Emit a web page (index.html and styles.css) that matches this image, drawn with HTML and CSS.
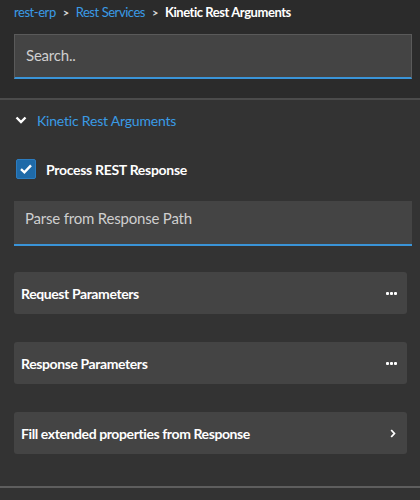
FILE: index.html
```html
<!DOCTYPE html>
<html>
<head>
<meta charset="utf-8">
<link rel="stylesheet" href="styles.css">
</head>
<body>
<div class="top">
  <nav class="crumbs">
    <a class="crumb-link">rest-erp</a>
    <span class="sep">&gt;</span>
    <a class="crumb-link">Rest Services</a>
    <span class="sep">&gt;</span>
    <span class="crumb-current">Kinetic Rest Arguments</span>
  </nav>
  <div class="search">Search..</div>
</div>
<div class="panel">
  <div class="section-head">
    <svg class="chev-down" width="12" height="8" viewBox="0 0 12 8"><path d="M1.5 1.5 L6 6 L10.5 1.5" fill="none" stroke="#fff" stroke-width="2.4"/></svg>
    <span class="section-title">Kinetic Rest Arguments</span>
  </div>
  <label class="check-row">
    <span class="checkbox"><svg width="14" height="12" viewBox="0 0 14 12"><path d="M2 6.2 L5.4 9.4 L12 2.4" fill="none" stroke="#fff" stroke-width="2.4"/></svg></span>
    <span class="check-label">Process REST Response</span>
  </label>
  <div class="field">Parse from Response Path</div>
  <div class="cards">
    <div class="card"><span>Request Parameters</span><span class="dots"><i></i><i></i><i></i></span></div>
    <div class="card"><span>Response Parameters</span><span class="dots"><i></i><i></i><i></i></span></div>
    <div class="card"><span>Fill extended properties from Response</span>
      <svg class="chev-right" width="6" height="9" viewBox="0 0 6 9"><path d="M1.2 1 L4.4 4.5 L1.2 8" fill="none" stroke="#fff" stroke-width="1.8"/></svg></div>
  </div>
  <div class="bottom-line"></div>
</div>
</body>
</html>
```
FILE: styles.css
```css
* { box-sizing: border-box; }
html, body { margin: 0; padding: 0; }
body {
  background: #333333;
  font-family: "Lato", "Liberation Sans", sans-serif;
  width: 420px;
  height: 500px;
  overflow: hidden;
}
.top {
  background: #2b2b2b;
  height: 100px;
  padding: 3px 8px 0 14px;
  border-bottom: 2px solid #4b4b4b;
}
.crumbs {
  display: flex;
  align-items: center;
  gap: 7px;
  height: 18px;
  font-size: 13px;
  letter-spacing: -0.45px;
}
.crumb-link { color: #3a9be6; }
.sep { color: #d8d8d8; font-size: 11px; font-weight: 700; }
.crumb-current { color: #ffffff; font-weight: 700; }
.search {
  margin-top: 13px;
  height: 45px;
  background: #444444;
  border: 1px solid #5a5a5a;
  border-bottom: 2px solid #3a94d8;
  color: #cfcfcf;
  font-size: 15px;
  padding: 11px 0 0 11px;
  letter-spacing: -0.2px;
}
.panel {
  padding: 9px 8px 0 14px;
}
.section-head {
  display: flex;
  align-items: center;
  height: 22px;
  gap: 10px;
  padding-left: 1px;
}
.section-title {
  color: #3a9be6;
  font-size: 14px;
  letter-spacing: -0.2px;
}
.check-row {
  display: flex;
  align-items: center;
  gap: 10px;
  margin-top: 28px;
  padding-left: 2px;
}
.checkbox {
  width: 20px;
  height: 20px;
  border-radius: 2px;
  background: #1f6aa8;
  border: 1px solid #2b7cc0;
  display: flex;
  align-items: center;
  justify-content: center;
}
.check-label {
  color: #ffffff;
  font-size: 14px;
  font-weight: 700;
  letter-spacing: -0.3px;
}
.field {
  margin-top: 22px;
  height: 45px;
  background: #444444;
  border-bottom: 2px solid #3a94d8;
  color: #cfcfcf;
  font-size: 15px;
  padding: 8px 0 0 11px;
  letter-spacing: -0.2px;
}
.cards {
  display: flex;
  flex-direction: column;
  gap: 28px;
  margin-top: 26px;
  padding-right: 5px;
}
.card {
  height: 42px;
  background: #444444;
  border-radius: 3px;
  display: flex;
  align-items: center;
  justify-content: space-between;
  padding: 0 10px 0 7px;
  color: #ffffff;
  font-size: 14px;
  font-weight: 700;
  letter-spacing: -0.4px;
}
.dots { display: flex; gap: 1px; margin-right: 0; }
.dots i { width: 3px; height: 3px; background: #fff; border-radius: 1px; display: block; }
.chev-right { margin-right: 1px; }
.bottom-line {
  margin: 32px -8px 0 -14px;
  height: 2px;
  background: #5e5e5e;
}
```
